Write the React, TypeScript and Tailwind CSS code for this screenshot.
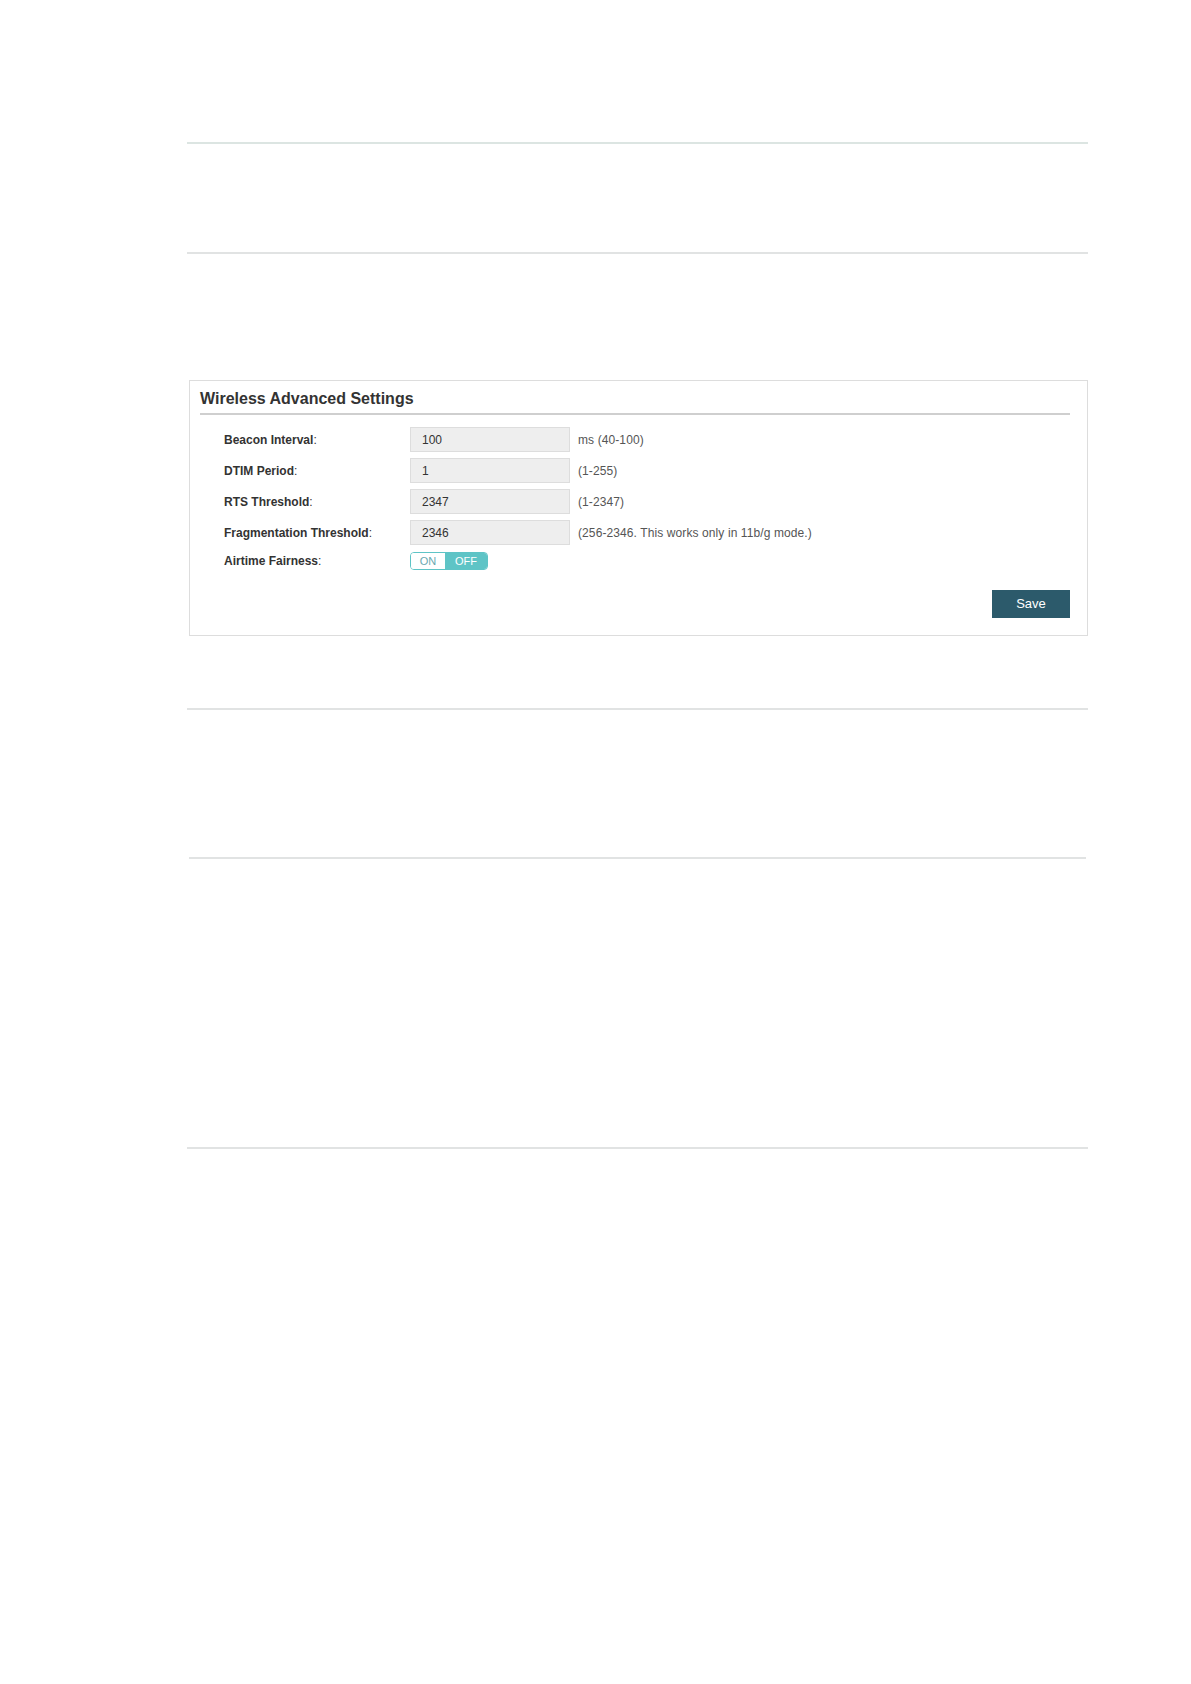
import React from "react";

const font = { fontFamily: '"Liberation Sans", Arial, sans-serif' };

function Row({ label, value, hint }: { label: string; value: string; hint: string }) {
  return (
    <div className="flex items-center h-[25px]">
      <div className="w-[186px] text-[12px] font-bold text-[#333]">
        {label}
        <span className="font-normal">:</span>
      </div>
      <div className="w-[160px] h-[25px] bg-[#eeeeee] border border-[#dddddd] flex items-center pl-[11px] text-[12px] text-[#333]">
        {value}
      </div>
      <div className="ml-[8px] text-[12px] tracking-[0.1px] text-[#555]">{hint}</div>
    </div>
  );
}

export default function App() {
  return (
    <div className="min-h-[1684px] w-full bg-white" style={font}>
      <div className="pl-[187px] pt-[142px] w-[1088px] flex flex-col">
        <div className="h-[2px] bg-[#dce5e2]" />
        <div className="h-[108px]" />
        <div className="h-[2px] bg-[#e1e3e3]" />
        <div className="h-[126px]" />
        <div className="ml-[2px] w-[899px] border border-[#dddddd] pl-[10px] pr-[17px] pt-[8px] pb-[17px]">
          <div className="text-[16px] leading-[20px] font-bold text-[#333] pb-[4px] border-b-2 border-[#cfcfcf]">
            Wireless Advanced Settings
          </div>
          <div className="pl-[24px] pt-[12px] flex flex-col gap-[6px]">
            <Row label="Beacon Interval" value="100" hint="ms (40-100)" />
            <Row label="DTIM Period" value="1" hint="(1-255)" />
            <Row label="RTS Threshold" value="2347" hint="(1-2347)" />
            <Row label="Fragmentation Threshold" value="2346" hint="(256-2346. This works only in 11b/g mode.)" />
            <div className="flex items-center h-[18px] mt-[1px]">
              <div className="w-[186px] text-[12px] font-bold text-[#333]">
                Airtime Fairness<span className="font-normal">:</span>
              </div>
              <div className="flex h-[18px] w-[78px] rounded-[4px] border border-[#5ec4c6] overflow-hidden text-[11px]">
                <div className="w-[34px] flex items-center justify-center text-[#6aa8b0] bg-white">ON</div>
                <div className="flex-1 flex items-center justify-center text-white bg-[#5ec4c6]">OFF</div>
              </div>
            </div>
          </div>
          <div className="flex justify-end mt-[20px]">
            <button className="w-[78px] h-[28px] bg-[#2c5a6b] text-white text-[13px]">Save</button>
          </div>
        </div>
        <div className="h-[72px]" />
        <div className="h-[2px] bg-[#e1e3e3]" />
        <div className="h-[147px]" />
        <div className="h-[2px] bg-[#e1e3e3] mx-[2px]" />
        <div className="h-[288px]" />
        <div className="h-[2px] bg-[#e1e3e3]" />
      </div>
    </div>
  );
}
